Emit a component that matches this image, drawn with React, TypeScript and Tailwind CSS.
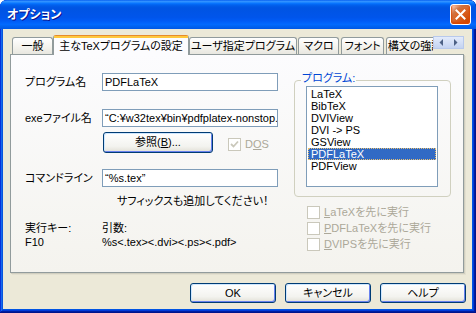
import React from "react";

const font =
  "[font-family:'Liberation_Sans','Noto_Sans_CJK_JP',sans-serif] [font-feature-settings:'palt']";

const xpButton =
  "rounded-[3px] border border-[#003C74] bg-[linear-gradient(to_bottom,#FFFFFF,#F3F3EF_70%,#E2E0D6)] shadow-[inset_-1px_-1px_#6982EE,inset_1px_1px_#CEE7FF] flex items-center justify-center text-black";

function Tab({ label, w, ml = "" }: { label: string; w: string; ml?: string }) {
  return (
    <div
      className={`${w} ${ml} h-[17px] mb-[1px] shrink-0 rounded-t-[3px] border border-b-0 border-[#919B9C] bg-[linear-gradient(to_bottom,#FFFFFF,#F3F2EC_60%,#E8E7E0)] flex items-center justify-center pt-[1px] whitespace-nowrap overflow-hidden`}
    >
      {label}
    </div>
  );
}

function DisabledCheck({ first, rest }: { first: string; rest: string }) {
  return (
    <div className="h-[16px] flex items-start">
      <div className="w-[13px] h-[13px] border border-[#CAC8BB] bg-white shrink-0" />
      <span className="ml-[4px] -mt-[1px] leading-[14px] text-[#ACA899] whitespace-nowrap">
        <span className="underline underline-offset-[1px]">{first}</span>
        {rest}
      </span>
    </div>
  );
}

export default function App() {
  const items = ["LaTeX", "BibTeX", "DVIView", "DVI -> PS", "GSView", "PDFLaTeX", "PDFView"];
  return (
    <div className={`w-[476px] h-[313px] bg-white ${font} text-[11px] text-black`}>
      <div className="w-full h-full flex flex-col rounded-t-[7px] overflow-hidden bg-[#0054E3] shadow-[inset_-1px_-1px_#00138c,inset_1px_1px_#0831d9,inset_-2px_-2px_#001ea0,inset_2px_2px_#166aee,inset_-3px_-3px_#003bda,inset_3px_3px_#0855dd]">
        {/* Title bar */}
        <div className="h-[29px] shrink-0 flex items-center justify-between pl-[7px] pr-[5px] bg-[linear-gradient(to_bottom,#0058ee_0%,#3593ff_4%,#288eff_7%,#127dff_10%,#036ffc_13%,#0262ee_17%,#0057e5_24%,#0054e3_30%,#0055eb_60%,#005bf5_72%,#026afe_84%,#0062ef_92%,#0057e6_100%)]">
          <span className="text-white font-bold text-[12px] leading-[14px] [text-shadow:1px_1px_#0f1089]">
            オプション
          </span>
          <div className="w-[21px] h-[21px] rounded-[3px] border border-white bg-[radial-gradient(circle_at_90%_90%,#cc4600_0%,#dc6527_55%,#cd7546_70%,#ffccb2_90%,#ffffff_100%)] shadow-[inset_0_-1px_2px_1px_#da4600] flex items-center justify-center">
            <svg width="11" height="11" viewBox="0 0 11 11">
              <path d="M1.5 1.5 L9.5 9.5 M9.5 1.5 L1.5 9.5" stroke="white" strokeWidth="2" strokeLinecap="square" />
            </svg>
          </div>
        </div>

        {/* Frame body */}
        <div className="flex-1 flex pl-[3px] pr-[4px] pb-[4px] min-h-0">
          <div className="flex-1 bg-[#ECE9D8] flex flex-col pl-[7px] pt-[6px]">
            {/* Tab row */}
            <div className="relative z-10 w-[454px] h-[20px] -mb-px flex">
              <div className="w-[423px] h-[20px] pl-[2px] overflow-hidden flex items-end">
                <Tab label="一般" w="w-[41px]" />
                <div className="w-[136px] h-[20px] shrink-0 rounded-t-[3px] border border-b-0 border-[#919B9C] border-t-[#E68B2C] bg-[#FCFCFE] flex flex-col">
                  <div className="h-[2px] bg-[#FFC83C] shrink-0" />
                  <div className="flex-1 flex items-center justify-center whitespace-nowrap">
                    主なTeXプログラムの設定
                  </div>
                </div>
                <Tab label="ユーザ指定プログラム" w="w-[108px]" />
                <Tab label="マクロ" w="w-[41px]" ml="ml-[1px]" />
                <Tab label="フォント" w="w-[43px]" ml="ml-[2px]" />
                <Tab label="構文の強調表示" w="w-[80px]" ml="ml-[2px]" />
              </div>
              <div className="w-[31px] h-[13px] mt-[1px] flex border border-[#B8C9EC] bg-[linear-gradient(to_bottom,#E3EBFB,#C4D3F1)]">
                <div className="flex-1 flex items-center justify-center">
                  <svg width="5" height="7" viewBox="0 0 5 7">
                    <path d="M4 0 L4 7 L0.5 3.5 Z" fill="#4D6185" />
                  </svg>
                </div>
                <div className="flex-1 flex items-center justify-center">
                  <svg width="5" height="7" viewBox="0 0 5 7">
                    <path d="M1 0 L1 7 L4.5 3.5 Z" fill="#4D6185" />
                  </svg>
                </div>
              </div>
            </div>

            {/* Panel */}
            <div className="w-[454px] h-[219px] border border-[#919B9C] bg-[linear-gradient(to_bottom,#FCFCFE,#F4F3EE)] shadow-[1px_1px_0_#D0CEBF,2px_2px_0_#E3E0D0] flex">
              {/* Left column */}
              <div className="w-[283px] shrink-0 pl-[14px] pt-[18px] flex flex-col">
                <div className="h-[18px] flex items-center">
                  <span className="w-[77px] shrink-0">プログラム名</span>
                  <div className="w-[176px] h-[18px] border border-[#7F9DB9] bg-white pl-[2px] flex items-center overflow-hidden whitespace-nowrap">
                    PDFLaTeX
                  </div>
                </div>
                <div className="h-[18px] mt-[18px] flex items-center">
                  <span className="w-[77px] shrink-0">exeファイル名</span>
                  <div className="w-[176px] h-[18px] border border-[#7F9DB9] bg-white pl-[2px] flex items-center overflow-hidden whitespace-nowrap">
                    “C:¥w32tex¥bin¥pdfplatex-nonstop.exe”
                  </div>
                </div>
                <div className="h-[21px] mt-[5px] flex items-center">
                  <div className={`ml-[78px] w-[110px] h-[21px] ${xpButton}`}>
                    参照(<span className="underline underline-offset-[1px]">B</span>)...
                  </div>
                  <div className="ml-[15px] mt-[4px] w-[13px] h-[13px] border border-[#CAC8BB] bg-white flex items-center justify-center">
                    <svg width="9" height="9" viewBox="0 0 9 9">
                      <path d="M1 4 L3.5 6.5 L8 1.5" stroke="#CAC8BB" strokeWidth="1.8" fill="none" />
                    </svg>
                  </div>
                  <span className="ml-[4px] mt-[4px] text-[#ACA899]">
                    D<span className="underline underline-offset-[1px]">O</span>S
                  </span>
                </div>
                <div className="h-[18px] mt-[16px] flex items-center">
                  <span className="w-[77px] shrink-0">コマンドライン</span>
                  <div className="w-[176px] h-[18px] border border-[#7F9DB9] bg-white pl-[2px] flex items-center overflow-hidden whitespace-nowrap">
                    “%s.tex”
                  </div>
                </div>
                <div className="h-[14px] mt-[7px] pl-[92px] leading-[14px] whitespace-nowrap">
                  サフィックスも追加してください！
                </div>
                <div className="mt-[13px] flex leading-[14px]">
                  <div className="w-[77px] shrink-0 flex flex-col">
                    <span>実行キー:</span>
                    <span>F10</span>
                  </div>
                  <div className="flex flex-col">
                    <span>引数:</span>
                    <span>%s&lt;.tex&gt;&lt;.dvi&gt;&lt;.ps&gt;&lt;.pdf&gt;</span>
                  </div>
                </div>
              </div>

              {/* Right column */}
              <div className="flex flex-col pt-[25px]">
                <div className="relative w-[157px] h-[117px] border border-[#D0D0BF] rounded-[4px]">
                  <span className="absolute -top-[10px] left-[6px] px-[1px] leading-[14px] bg-[#FBFBFA] text-[#0046D5] whitespace-nowrap">
                    プログラム:
                  </span>
                  <div className="ml-[11px] mt-[5px] w-[132px] h-[101px] border border-[#7F9DB9] bg-white p-[1px] flex flex-col">
                    {items.map((it) =>
                      it === "PDFLaTeX" ? (
                        <div
                          key={it}
                          className="h-[12px] leading-[10px] pl-[2px] bg-[#316AC5] text-white border border-dotted border-[#E8C070] whitespace-nowrap"
                        >
                          {it}
                        </div>
                      ) : (
                        <div key={it} className="h-[12px] leading-[12px] pl-[3px] whitespace-nowrap">
                          {it}
                        </div>
                      )
                    )}
                  </div>
                </div>
                <div className="mt-[9px] ml-[13px] flex flex-col">
                  <DisabledCheck first="L" rest="aTeXを先に実行" />
                  <DisabledCheck first="P" rest="DFLaTeXを先に実行" />
                  <DisabledCheck first="D" rest="VIPSを先に実行" />
                </div>
              </div>
            </div>

            {/* Buttons */}
            <div className="mt-[10px] w-[456px] flex justify-end gap-[9px]">
              <div className={`w-[86px] h-[20px] ${xpButton}`}>OK</div>
              <div className={`w-[86px] h-[20px] ${xpButton}`}>キャンセル</div>
              <div className={`w-[86px] h-[20px] ${xpButton}`}>ヘルプ</div>
            </div>
          </div>
        </div>
      </div>
    </div>
  );
}
